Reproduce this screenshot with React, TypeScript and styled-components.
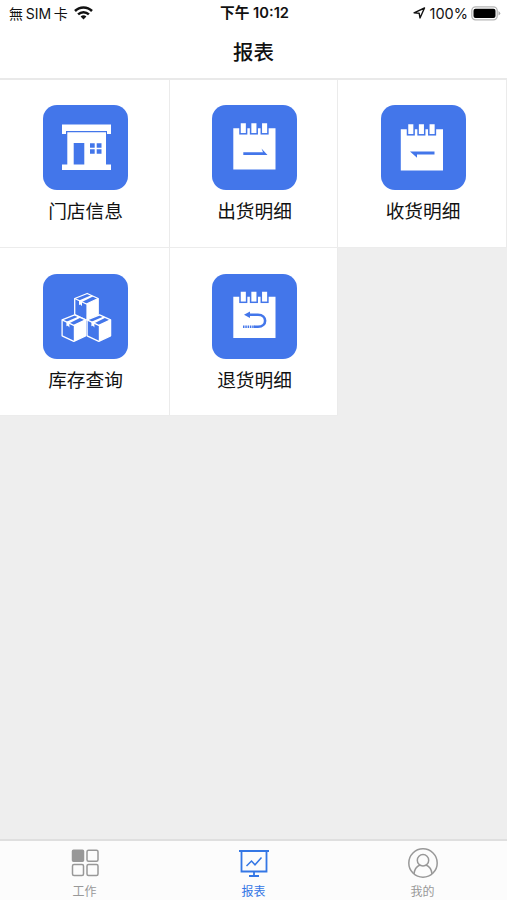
import React from "react";
import styled, { createGlobalStyle } from "styled-components";

const BLUE = "#4376ea";

const GlobalStyle = createGlobalStyle`
  * { box-sizing: border-box; }
  body { margin: 0; background: #eeeeee; font-family: Inter, "Noto Sans CJK SC", sans-serif; }
`;

const Screen = styled.div`
  width: 507px;
  height: 900px;
  display: flex;
  flex-direction: column;
  overflow: hidden;
  background: #eeeeee;
  color: #111;
`;

const StatusBar = styled.header`
  height: 27px;
  flex: none;
  display: grid;
  grid-template-columns: 1fr auto 1fr;
  align-items: center;
  padding: 0 6px 0 9px;
  background: #fff;
  font-size: 14.5px;
  line-height: 27px;
  white-space: nowrap;
`;

const StatusGroup = styled.div<{ $end?: boolean }>`
  display: flex;
  align-items: center;
  justify-content: ${(p) => (p.$end ? "flex-end" : "flex-start")};
  svg { position: relative; top: -0.5px; }
`;

const Carrier = styled.span`
  font-family: Inter, "Noto Sans CJK TC", sans-serif;
  font-size: 14px;
  margin-right: 6px;
  word-spacing: -1.2px;
`;

const Time = styled.span`
  font-size: 14.7px;
  font-weight: 600;
  word-spacing: 0;
  margin-right: 1px;
`;

const Percent = styled.span`
  margin: 0 3px 0 4px;
`;

const Title = styled.h1`
  height: 53px;
  flex: none;
  margin: 0;
  background: #fff;
  border-bottom: 2px solid #e9e9e9;
  text-align: center;
  font-size: 20.5px;
  font-weight: 500;
  line-height: 52px;
`;

const Grid = styled.main`
  flex: 1;
  display: grid;
  grid-template-columns: 170px 168px 169px;
  grid-auto-rows: 168px;
  align-content: start;
`;

const Cell = styled.section<{ $lower?: boolean }>`
  display: flex;
  flex-direction: column;
  align-items: center;
  padding: ${(p) => (p.$lower ? 26 : 25.4)}px 0 0 2px;
  background: #fff;
  border-right: 1px solid #ebebeb;
  border-bottom: 1px solid #ececec;
`;

const Tile = styled.svg`
  width: 85px;
  height: 85px;
  flex: none;
  display: block;
  border-radius: 14px;
  background: ${BLUE};
`;

const Label = styled.span`
  margin-top: 9px;
  font-size: 18.7px;
  line-height: 26px;
`;

const TabBar = styled.nav`
  height: 61px;
  flex: none;
  display: grid;
  grid-template-columns: repeat(3, 1fr);
  border-top: 2px solid #dfdfdf;
  background: #fcfcfc;
`;

const Tab = styled.div<{ $active?: boolean }>`
  display: flex;
  flex-direction: column;
  align-items: center;
  padding-top: 7px;
  color: ${(p) => (p.$active ? "#3477e5" : "#989898")};
  svg { display: block; }
`;

const TabText = styled.span`
  margin-top: 5px;
  font-size: 12px;
  line-height: 17px;
`;

function Store() {
  return (
    <Tile viewBox="0 0 85 85" fill="#fff">
      <path d="M19 19.5H68V29H64V26H23V29H19Z" />
      <path d="M24.3 27.2H63V59.5H68V65H19V59.5H24.3Z" />
      <path fill={BLUE} d="M30.7 38H41.3V59.5H30.7ZM47 38.3H51.7V42.7H47ZM53.7 38.3H58.5V42.7H53.7ZM47 44.3H51.7V48.7H47ZM53.7 44.3H58.5V48.7H53.7Z" />
    </Tile>
  );
}

function Notepad({ x = 0, y = 0, children }: { x?: number; y?: number; children: React.ReactNode }) {
  return (
    <Tile viewBox="0 0 85 85" fill="#fff">
      <g transform={`translate(${x} ${y})`}>
        <path d="M21.3 23.3H63.5V64.5H21.3Z" />
        {[28.7, 39.3, 50].map((left) => (
          <rect key={left} x={left - 0.7} y="17.5" width="6.6" height="11.3" stroke={BLUE} strokeWidth="1.5" />
        ))}
        {children}
      </g>
    </Tile>
  );
}

function Box({ x, y }: { x: number; y: number }) {
  return (
    <g transform={`translate(${x} ${y})`} strokeLinejoin="round">
      <path d="M13 .5 24 5.5V21.5L12.2 27 .5 21.5V5.5Z" fill={BLUE} stroke="#fff" strokeWidth="1.3" />
      <path d="M12.2 11 24 5.5V21.5L12.2 27Z" fill="#fff" />
      <path d="M.5 5.5 12.2 11 24 5.5" fill="none" stroke="#fff" strokeWidth="1.3" />
      <path d="M4.8 7.5 17 2.2 19.2 3.2 7.8 9V13.2L6.3 11.5 4.8 12Z" fill="#fff" />
    </g>
  );
}

function Boxes() {
  return (
    <Tile viewBox="0 0 85 85">
      <Box x={31.2} y={19} />
      <Box x={18.6} y={40.3} />
      <Box x={43.6} y={40.3} />
    </Tile>
  );
}

const Wifi = () => (
  <svg width="19" height="14" viewBox="0 0 19 14" fill="none" stroke="#111" strokeWidth="2.5">
    <path d="M1 5C5.8.2 13.2.2 18 5M4.1 8.3C7.2 5.4 11.8 5.4 14.9 8.3" />
    <path d="M9.5 13.4 6.6 10.5Q9.5 8.2 12.4 10.5Z" fill="#111" stroke="none" />
  </svg>
);

const Location = () => (
  <svg width="13" height="12" viewBox="0 0 13 12" fill="none" stroke="#111" strokeWidth="1.4" strokeLinejoin="round">
    <path d="M11.5 1 1 5.8 6.2 6.3 7 11Z" />
  </svg>
);

const Battery = () => (
  <svg width="30" height="15" viewBox="0 0 30 15">
    <rect x=".8" y=".8" width="25.4" height="13" rx="3.8" fill="#fff" stroke="#b5b5b5" strokeWidth="1.3" />
    <rect x="2.5" y="2.7" width="22" height="9.3" rx="2" fill="#000" />
    <path d="M27.5 5Q31 7.3 27.5 9.6Z" fill="#aaa" />
  </svg>
);

const WorkIcon = () => (
  <svg width="30" height="30" viewBox="0 0 30 30" fill="none" stroke="currentColor" strokeWidth="1.5">
    <rect x="2.5" y="2.2" width="11" height="11" rx="1" fill="currentColor" />
    <rect x="17" y="2.2" width="11" height="11" rx="1.5" />
    <rect x="2.5" y="16.5" width="11" height="11" rx="1.5" />
    <rect x="17" y="16.5" width="11" height="11" rx="1.5" />
  </svg>
);

const ReportIcon = () => (
  <svg width="30" height="30" viewBox="0 0 30 30" fill="none" stroke="currentColor" strokeWidth="1.8">
    <path d="M0 3H30M2.5 3V23.5H27.5V3M15 23.5V27.5M10 28H20" />
    <path d="M7.5 18 12.5 13 16 16.8 22.5 9.5" strokeWidth="1.5" />
  </svg>
);

const MineIcon = () => (
  <svg width="32" height="30" viewBox="0 0 32 30" fill="none" stroke="currentColor" strokeWidth="1.5">
    <circle cx="16" cy="15" r="14.2" />
    <circle cx="16" cy="12.3" r="5.7" />
    <path d="M7 26C7.5 20.8 10.5 18 13 17M19 17C21.5 18 24.5 20.8 25 26" />
  </svg>
);

export default function App() {
  return (
    <Screen>
      <GlobalStyle />
      <StatusBar>
        <StatusGroup><Carrier>無 SIM 卡</Carrier><Wifi /></StatusGroup>
        <Time>下午 10:12</Time>
        <StatusGroup $end><Location /><Percent>100%</Percent><Battery /></StatusGroup>
      </StatusBar>
      <Title>报表</Title>
      <Grid>
        <Cell><Store /><Label>门店信息</Label></Cell>
        <Cell>
          <Notepad><path d="M31.3 47.2H51L49.5 43.5 55.5 50H31.3Z" fill={BLUE} /></Notepad>
          <Label>出货明细</Label>
        </Cell>
        <Cell>
          <Notepad x={-1.5} y={1}><path d="M55 45.5H30.5L37.5 51.7V48.4H55Z" fill={BLUE} /></Notepad>
          <Label>收货明细</Label>
        </Cell>
        <Cell $lower><Boxes /><Label>库存查询</Label></Cell>
        <Cell $lower>
          <Notepad y={-0.5}>
            <path d="M36 41.3H46C55.5 41.3 55.5 53.3 46 53.3H42" fill="none" stroke={BLUE} strokeWidth="2.6" />
            <path d="M32 41.3 38 38V44.5Z" fill={BLUE} />
            <path d="M31 53.3H43" stroke={BLUE} strokeWidth="2.6" strokeDasharray="1.5 .8" />
          </Notepad>
          <Label>退货明细</Label>
        </Cell>
      </Grid>
      <TabBar>
        <Tab><WorkIcon /><TabText>工作</TabText></Tab>
        <Tab $active><ReportIcon /><TabText>报表</TabText></Tab>
        <Tab><MineIcon /><TabText>我的</TabText></Tab>
      </TabBar>
    </Screen>
  );
}
